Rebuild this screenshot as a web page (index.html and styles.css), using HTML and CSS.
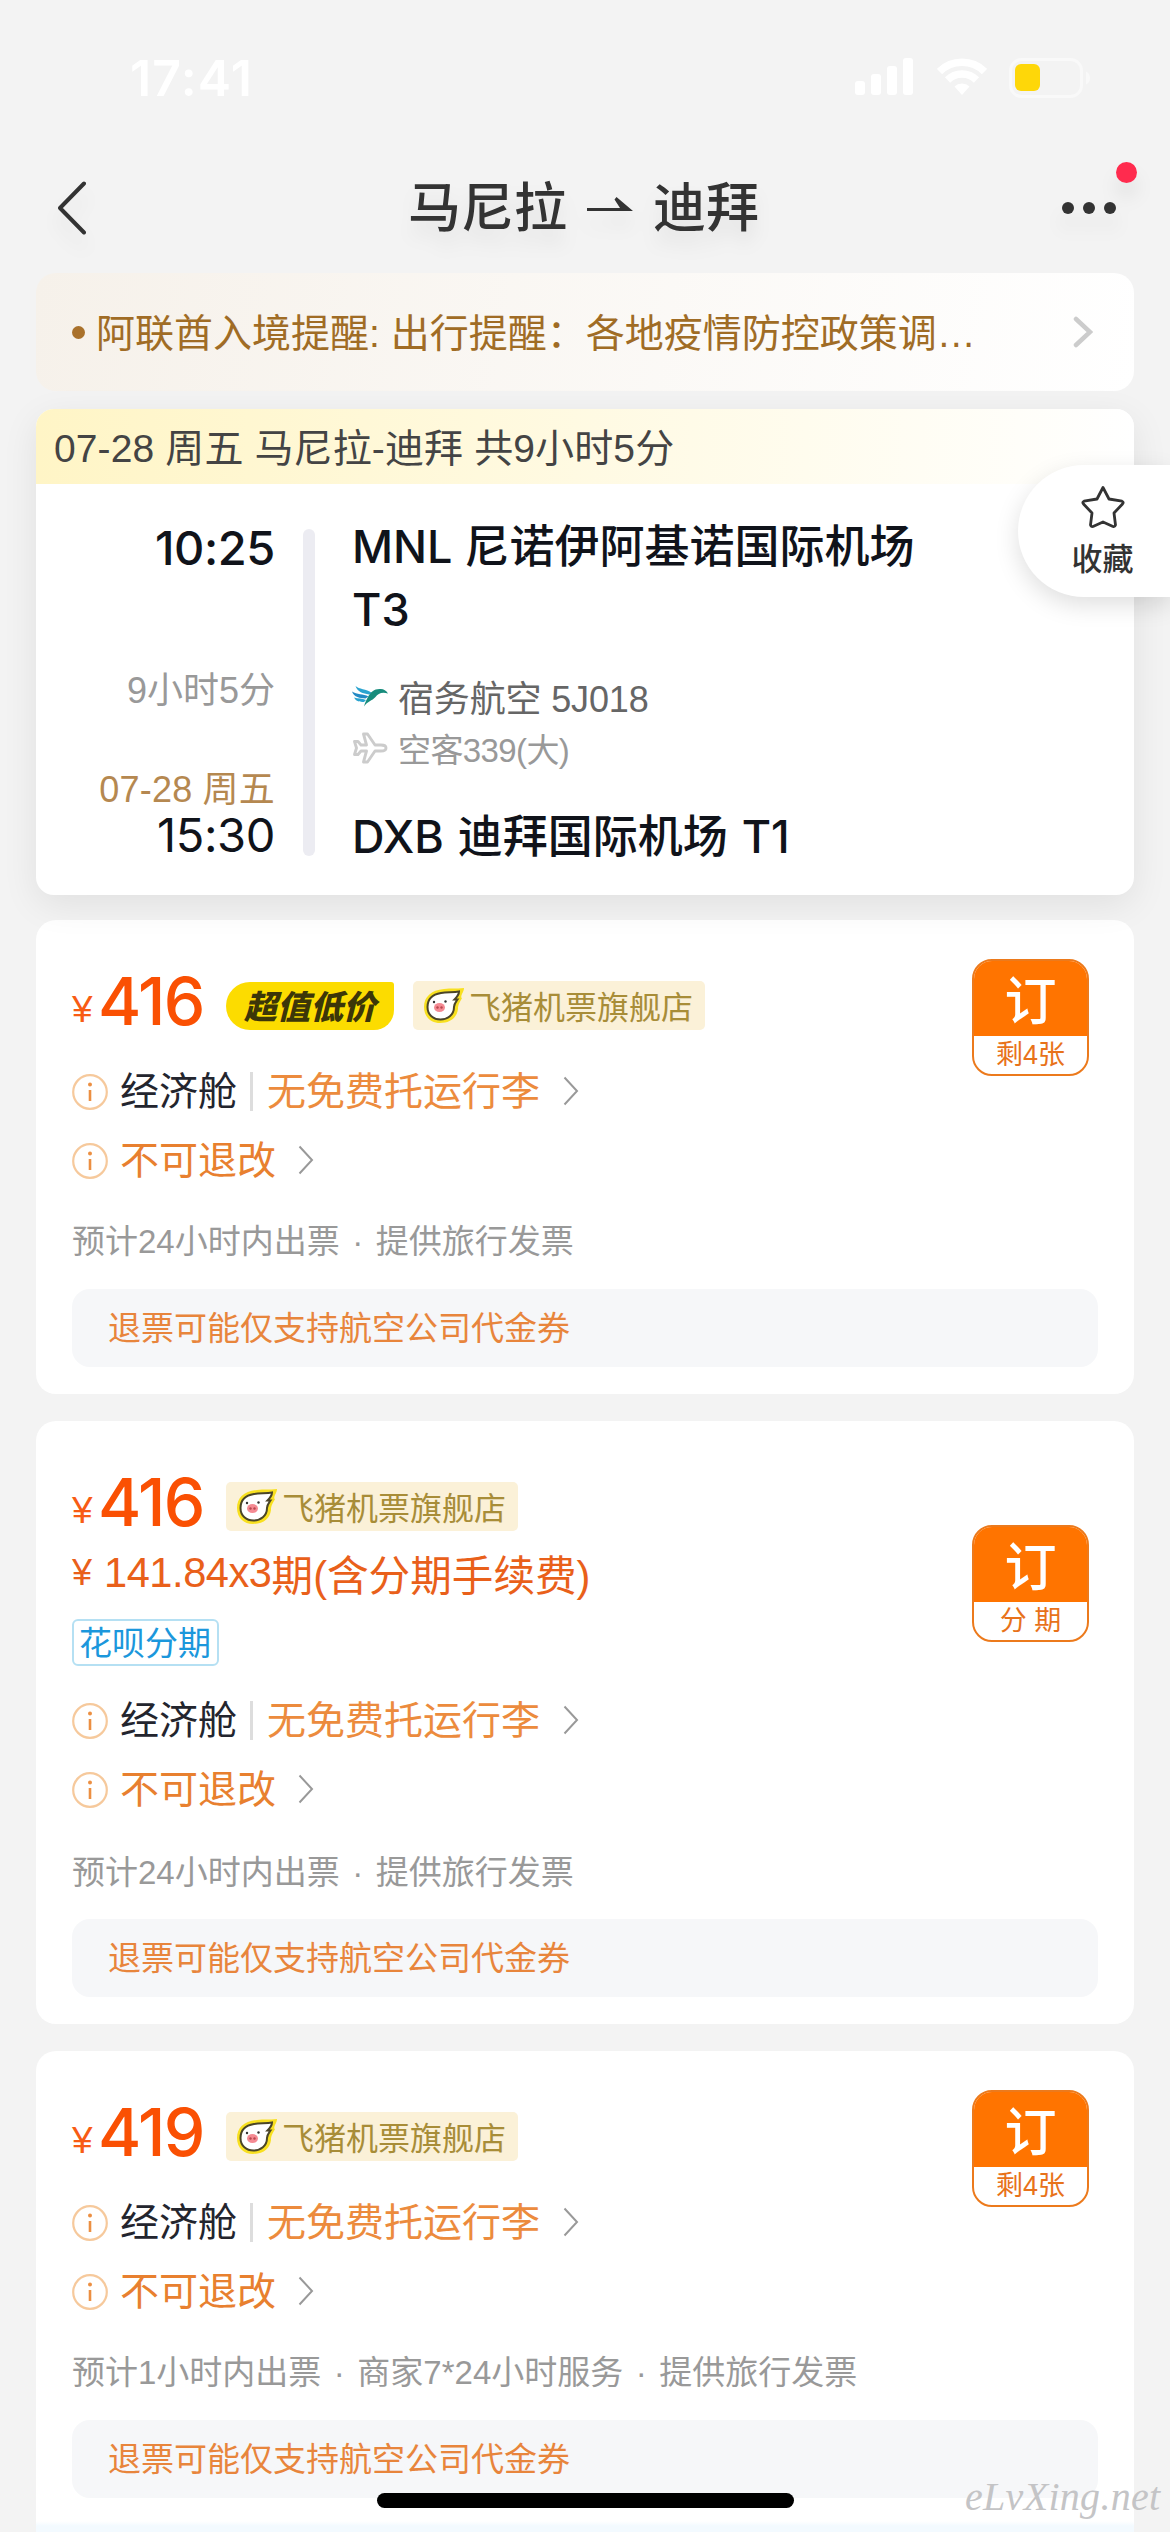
FILE: index.html
```html
<!DOCTYPE html>
<html lang="zh-CN">
<head>
<meta charset="utf-8">
<title>马尼拉 - 迪拜</title>
<link rel="stylesheet" href="styles.css">
</head>
<body>
<svg class="defs" width="0" height="0">
  <symbol id="info" viewBox="0 0 36 36"><circle cx="18" cy="18" r="16.8" fill="none" stroke="#f6c99c" stroke-width="2.2"/><circle cx="18" cy="10.6" r="2" fill="#ec8f42"/><path d="M18 16v11" stroke="#ec8f42" stroke-width="2.6"/></symbol>
  <symbol id="chev" viewBox="0 0 16 30"><path d="M1.5 1.5 14 15 1.5 28.500" fill="none" stroke="#999" stroke-width="2"/></symbol>
  <symbol id="pig" viewBox="0 0 42 38">
    <path d="M41 1C33 2 28 1 21 2 8 3 1 10 1 20c0 10 7 16 16 16 11 0 17-6 18-14 0-5 2-7 4-11-1 0-1-2 0-4 1-2 2-4 2-6z" fill="#f8e020"/>
    <path d="M36 4.500C30 5.500 24 5 18 6 9 7.500 4.500 12 4.500 20c0 8 6 12.500 13 12.500S31 28 31 20c0-3 1-4 3.500-7.500L31.500 12.500C34 10 36 8 36 4.500z" fill="#fff" stroke="#4a4528" stroke-width="2"/>
    <ellipse cx="16.500" cy="20.500" rx="5.500" ry="4.500" fill="#f58a93"/><circle cx="14.500" cy="20.500" r="1.200" fill="#b8474f"/><circle cx="18.500" cy="20.500" r="1.200" fill="#b8474f"/>
    <circle cx="11" cy="15" r="1.200" fill="#333"/><circle cx="22.500" cy="14.500" r="1.200" fill="#333"/>
  </symbol>
</svg>
<div class="screen">
  <div class="status">
    <span class="clock">17:41</span>
    <div class="indicators">
      <svg width="60" height="38" viewBox="0 0 60 38" fill="#fff"><rect x="0" y="23" width="10" height="14" rx="3"/><rect x="16" y="16" width="10" height="21" rx="3"/><rect x="32" y="8" width="10" height="29" rx="3"/><rect x="48" y="0" width="10" height="37" rx="3"/></svg>
      <svg width="50" height="38" viewBox="0 0 50 38"><g fill="none" stroke="#fff" stroke-width="7.500"><path d="M2.500 13.500a32 32 0 0 1 45 0"/><path d="M10.500 22a20.500 20.500 0 0 1 29 0"/></g><path d="M25 37l-7.500-8.500a11 11 0 0 1 15 0z" fill="#fff"/></svg>
      <svg width="82" height="40" viewBox="0 0 82 40"><rect x="1.500" y="1.500" width="71" height="37" rx="11" fill="none" stroke="#f9f9f9" stroke-width="3"/><rect x="6" y="6" width="25" height="27" rx="6" fill="#fed709"/><path d="M77 13.500q4 2 4 6.500t-4 6.500z" fill="#f9f9f9"/></svg>
    </div>
  </div>
  <header class="nav">
    <svg class="back" width="30" height="54" viewBox="0 0 30 54"><path d="M27 2.500 3 27l24 24.500" fill="none" stroke="#333" stroke-width="4" stroke-linecap="round" stroke-linejoin="round"/></svg>
    <h1 class="title"><span>马尼拉</span><svg width="48" height="16" viewBox="0 0 48 16"><path d="M1 12h33L28.500 3.500 30.500 1 47 15H1z" fill="#333"/></svg><span>迪拜</span></h1>
    <div class="more"><i></i><i></i><i></i><b class="dot"></b></div>
  </header>
  <div class="notice">
    <i class="bullet"></i>
    <span class="notice-text">阿联酋入境提醒: 出行提醒：各地疫情防控政策调…</span>
    <svg width="20" height="32" viewBox="0 0 20 32"><path d="M3 3 17 16 3 29" fill="none" stroke="#ccc" stroke-width="4.500" stroke-linecap="round"/></svg>
  </div>
  <section class="summary">
    <div class="summary-head">07-28 周五 马尼拉-迪拜 共9小时5分</div>
    <div class="flight">
      <div class="times">
        <span class="t dep">10:25</span>
        <span class="dur">9小时5分</span>
        <span class="date">07-28 周五</span>
        <span class="t arr">15:30</span>
      </div>
      <div class="rail"></div>
      <div class="places">
        <div class="airport">MNL 尼诺伊阿基诺国际机场<br>T3</div>
        <div class="carrier"><svg width="36" height="22" viewBox="0 0 36 22"><path d="M3.500 1C7 4.500 14 3.500 20 8l-3 1.500C11 8.500 5.500 7 3.500 1z" fill="#2aa3cf"/><path d="M0 6.500c5 3.500 11 2 16.500 5l-3 2C8 13 2 12.500 0 6.500z" fill="#2389c4"/><path d="M2 12.500c4 1.500 8 .5 12 2.500l-2 2C8 17 4 16.500 2 12.500z" fill="#2aa3cf"/><path d="M36 8.500C34 5 31 3.500 27.500 4 22 4 18.500 7.500 16.500 11c-1.500 3-3.500 6-4.500 10.500 3.500-5.500 8-5.500 11.500-9.500 2.500-3 6-5.500 12.500-3.500z" fill="#178c7c"/></svg><span>宿务航空 5J018</span></div>
        <div class="plane"><svg width="36" height="32" viewBox="0 0 36 32"><path d="M34 16c0-2-2-3-5-3h-6L15.500 2h-4l3 11H9L6 9.500H2.500l2 6.500-2 6.500H6L9 19h5.500l-3 11h4L23 19h6c3 0 5-1 5-3z" fill="none" stroke="#ccc" stroke-width="2.900" stroke-linejoin="round"/></svg><span>空客339(大)</span></div>
        <div class="airport last">DXB 迪拜国际机场 T1</div>
      </div>
    </div>
  </section>

  <section class="offer">
    <div class="main">
      <div class="price-row"><span class="yen">¥</span><span class="price">416</span><span class="deal">超值低价</span><span class="store"><svg width="42" height="38"><use href="#pig"/></svg>飞猪机票旗舰店</span></div>
      <div class="rule"><svg class="info"><use href="#info"/></svg><span class="cabin">经济舱</span><span class="warn">无免费托运行李</span><svg class="chev"><use href="#chev"/></svg></div>
      <div class="rule"><svg class="info"><use href="#info"/></svg><span class="warn2">不可退改</span><svg class="chev"><use href="#chev"/></svg></div>
      <div class="est">预计24小时内出票<em>·</em>提供旅行发票</div>
    </div>
    <div class="book"><b>订</b><span>剩4张</span></div>
    <div class="tip">退票可能仅支持航空公司代金券</div>
  </section>

  <section class="offer tall">
    <div class="main">
      <div class="price-row"><span class="yen">¥</span><span class="price">416</span><span class="store"><svg width="42" height="38"><use href="#pig"/></svg>飞猪机票旗舰店</span></div>
      <div class="instal"><span class="yen2">¥</span><span class="amount">141.84x3</span>期(含分期手续费)</div>
      <div class="huabei">花呗分期</div>
      <div class="rule"><svg class="info"><use href="#info"/></svg><span class="cabin">经济舱</span><span class="warn">无免费托运行李</span><svg class="chev"><use href="#chev"/></svg></div>
      <div class="rule"><svg class="info"><use href="#info"/></svg><span class="warn2">不可退改</span><svg class="chev"><use href="#chev"/></svg></div>
      <div class="est">预计24小时内出票<em>·</em>提供旅行发票</div>
    </div>
    <div class="book"><b>订</b><span>分 期</span></div>
    <div class="tip">退票可能仅支持航空公司代金券</div>
  </section>

  <section class="offer final">
    <div class="main">
      <div class="price-row"><span class="yen">¥</span><span class="price">419</span><span class="store"><svg width="42" height="38"><use href="#pig"/></svg>飞猪机票旗舰店</span></div>
      <div class="rule"><svg class="info"><use href="#info"/></svg><span class="cabin">经济舱</span><span class="warn">无免费托运行李</span><svg class="chev"><use href="#chev"/></svg></div>
      <div class="rule"><svg class="info"><use href="#info"/></svg><span class="warn2">不可退改</span><svg class="chev"><use href="#chev"/></svg></div>
      <div class="est">预计1小时内出票<em>·</em>商家7*24小时服务<em>·</em>提供旅行发票</div>
    </div>
    <div class="book"><b>订</b><span>剩4张</span></div>
    <div class="tip">退票可能仅支持航空公司代金券</div>
  </section>

  <div class="fav"><svg width="46" height="46" viewBox="0 0 46 46"><path d="M23 2.500l6 11.500 13 2.200q2 .8.500 2.800L34 28l1.500 12q-.5 2-2.500 1.500L23 37l-10 4.500q-2 .5-2.500-1.500L12 28 3.500 19q-1.500-2 .5-2.800L17 14z" fill="none" stroke="#333" stroke-width="2.800" stroke-linejoin="round"/></svg><span>收藏</span></div>
  <div class="home"></div>
  <div class="mark">eLvXing.net</div>
</div>
</body>
</html>
```

FILE: styles.css
```css
* { box-sizing: border-box; }
body { margin: 0; background: #f3f3f3; }
.defs { position: absolute; }
.screen {
  position: relative; width: 1170px; height: 2532px; overflow: hidden;
  background: #f3f3f3; color: #333;
  font-family: "Liberation Sans", "Noto Sans CJK SC", sans-serif;
  font-size: 39px; white-space: nowrap;
}
.screen svg { display: block; flex: none; }
.status { height: 156px; display: flex; justify-content: space-between; padding: 58px 79px 0 130px; }
.clock { font: 600 50px/40px Inter, sans-serif; color: #fff; letter-spacing: 1.200px; }
.indicators { display: flex; gap: 22px; height: 40px; }
.nav { height: 117px; display: flex; align-items: center; justify-content: space-between; padding: 0 54px 14px 57px; }
.nav .back, .title, .more { filter: drop-shadow(0 14px 9px rgba(0,0,0,.07)); }
.title { margin: -8px 0 0 18px; display: flex; align-items: center; gap: 19px; font-size: 53px; font-weight: 500; line-height: 80px; font-family: "Noto Sans CJK SC", sans-serif; }
.more { position: relative; display: flex; gap: 9px; }
.more i { width: 12px; height: 12px; border-radius: 50%; background: #333; }
.dot { position: absolute; left: 54px; top: -40px; width: 21px; height: 21px; border-radius: 50%; background: #ff2b4e; }
.notice {
  height: 118px; margin: 0 36px; border-radius: 20px; padding: 0 41px 0 36px;
  display: flex; align-items: center; background: linear-gradient(100deg, #f6f1ea, #fff);
  color: #a06c25;
}
.bullet { width: 13px; height: 13px; border-radius: 50%; background: #a9712b; margin-right: 11px; }
.notice-text { flex: 1; padding-bottom: 4px; }
.summary {
  position: relative; z-index: 1; margin: 18px 36px 0; height: 486px; border-radius: 18px; background: #fff;
  box-shadow: 0 10px 36px rgba(0,0,0,.08);
}
.summary-head {
  height: 75px; line-height: 79px; padding-left: 18px; border-radius: 18px 18px 0 0;
  background: linear-gradient(90deg, #fff5c6, #fff); color: #444; letter-spacing: .12px;
}
.flight { display: flex; padding-top: 45px; }
.times { width: 239px; height: 330px; padding-top: 2px; display: flex; flex-direction: column; align-items: flex-end; }
.t { font: 500 47px/34px Inter, sans-serif; color: #10131a; letter-spacing: -.4px; }
.arr { font-weight: 400; margin-top: 8px; }
.dur { margin-top: 106px; line-height: 40px; font-size: 36px; color: #999; }
.date { margin-top: 59px; line-height: 40px; font-size: 36px; color: #b58850; letter-spacing: .2px; }
.rail { width: 12px; height: 327px; margin-left: 28px; border-radius: 6px; background: #ececf2; }
.places { margin-left: 37px; }
.airport { font: 500 45px/63px Inter, "Noto Sans CJK SC", sans-serif; color: #10131a; height: 126px; margin-top: -14px; }
.airport.last { height: 63px; margin-top: 31px; word-spacing: 2px; }
.carrier, .plane { display: flex; align-items: center; gap: 10px; }
.carrier { height: 52px; margin-top: 29px; font-size: 36px; color: #666; letter-spacing: -.15px; }
.plane { height: 52px; font-size: 33px; color: #999; letter-spacing: -.6px; }
.fav {
  position: absolute; z-index: 2; right: 0; top: 465px; width: 152px; height: 132px;
  border-radius: 66px 0 0 66px; background: #fff; box-shadow: 0 8px 24px rgba(0,0,0,.13);
  display: flex; flex-direction: column; align-items: center; padding: 20px 0 0 17px;
  font-size: 31px; line-height: 52px; font-weight: 500; font-family: "Noto Sans CJK SC", sans-serif;
}
.offer {
  margin: 25px 36px 27px; height: 474px; border-radius: 20px; background: #fff; padding: 45px 36px 27px;
  display: grid; grid-template-columns: 1fr 117px; grid-template-rows: 1fr 78px;
}
.offer + .offer { margin-top: 0; }
.main { padding-top: 4px; min-width: 0; }
.price-row { height: 64px; display: flex; align-items: center; }
.yen { font-size: 37px; line-height: 40px; color: #f85c14; width: 26px; padding-top: 17px; }
.price { font: 500 66px/64px Inter, sans-serif; color: #fa5003; letter-spacing: -1.600px; width: 128px; }
.deal {
  width: 168px; height: 48px; line-height: 46px; margin-top: 10px; margin-right: 19px; text-align: center;
  font-size: 33px; font-weight: 900; font-family: "Noto Sans CJK SC", sans-serif; font-style: italic; color: #3c3608; background: #fcdc00;
  border-radius: 24px 3px 20px 24px;
}
.store {
  display: flex; align-items: center; gap: 4px; width: 292px; height: 49px; margin-top: 8px; padding-left: 10px;
  border-radius: 5px; background: #fbf1d8; color: #a88d38; font-size: 32px;
}
.store svg { margin-top: 2px; }
.rule { height: 69px; display: flex; align-items: center; line-height: 39px; }
.price-row + .rule { margin-top: 24px; }
.info { width: 36px; height: 36px; margin-right: 12px; }
.cabin { color: #23252e; padding-right: 13px; border-right: 3px solid #ddd; margin-right: 14px; }
.warn { color: #ec8b3d; margin-right: 23px; }
.warn2 { color: #e8802f; margin-right: 22px; }
.chev { width: 16px; height: 30px; margin-top: -2px; }
.est { margin-top: 22px; line-height: 50px; font-size: 33px; color: #999; }
.est em { font-style: normal; display: inline-block; width: 36px; text-align: center; }
.book {
  width: 117px; height: 117px; margin: -6px 0 0 -9px; border: 2px solid #ec7a1c; border-radius: 20px; overflow: hidden;
  display: flex; flex-direction: column; text-align: center; color: #e8721a; font-size: 27px; line-height: 38px;
}
.book b { height: 75px; flex: none; font: 500 52px/74px "Noto Sans CJK SC", sans-serif; color: #fff; background: #ff7400; }
.tip { grid-column: 1 / 3; height: 78px; line-height: 80px; padding-left: 36px; border-radius: 18px; background: #f6f7f9; color: #e8853c; font-size: 33px; }
.tall { height: 603px; }
.tall .book { margin-top: 59px; }
.instal { height: 56px; margin-top: 11px; display: flex; align-items: center; font-size: 41.600px; color: #e9601a; }
.yen2 { font-size: 36px; width: 32px; }
.amount { letter-spacing: -.45px; }
.huabei { width: 147px; height: 47px; margin: 18px 0 20px; line-height: 45px; padding-left: 5px; font-size: 33px; color: #1b97dc; border: 2px solid #b5e0f3; border-radius: 6px; }
.tall .est { margin-top: 24px; }
.final {
  margin-bottom: 0; height: 481px; padding-bottom: 34px; border-radius: 20px 20px 0 0;
  background: linear-gradient(#fff 470px, #f3faff 475px);
}
.home { position: absolute; z-index: 3; left: 377px; top: 2493px; width: 417px; height: 15px; border-radius: 8px; background: #000; }
.mark { position: absolute; right: 8px; top: 2474px; width: 197px; font: italic 40px/46px "Liberation Serif", serif; letter-spacing: .3px; color: #c4c4c6; }
```
